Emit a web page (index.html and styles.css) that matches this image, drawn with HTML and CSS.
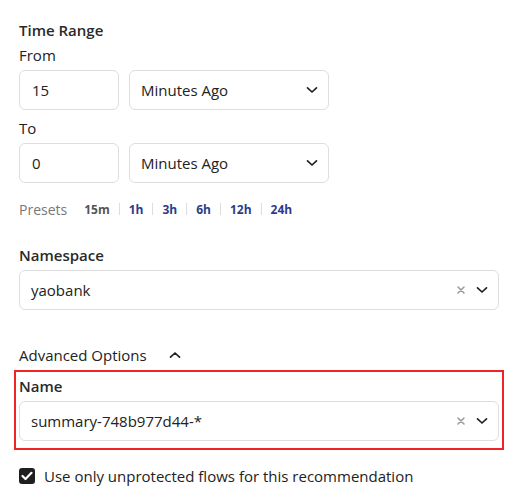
FILE: index.html
```html
<!DOCTYPE html>
<html lang="en">
<head>
    <meta charset="UTF-8">
    <meta name="viewport" content="width=device-width, initial-scale=1.0">
    <title>Recommendation Options</title>
    <link rel="stylesheet" href="styles.css">
</head>
<body>
    <div class="panel">
        <div class="label title">Time Range</div>
        <div class="label">From</div>
        <div class="row">
            <div class="field num">15</div>
            <div class="field unit">
                <span>Minutes Ago</span>
                <svg class="chev" width="12" height="8" viewBox="0 0 12 8"><path d="M1.5 1.8 L6 6 L10.5 1.8" fill="none" stroke="#222" stroke-width="1.7" stroke-linecap="round" stroke-linejoin="round"/></svg>
            </div>
        </div>
        <div class="label to">To</div>
        <div class="row">
            <div class="field num">0</div>
            <div class="field unit">
                <span>Minutes Ago</span>
                <svg class="chev" width="12" height="8" viewBox="0 0 12 8"><path d="M1.5 1.8 L6 6 L10.5 1.8" fill="none" stroke="#222" stroke-width="1.7" stroke-linecap="round" stroke-linejoin="round"/></svg>
            </div>
        </div>

        <div class="presets">
            <span class="presets-label">Presets</span>
            <span class="preset current">15m</span>
            <span class="sep"></span>
            <span class="preset">1h</span>
            <span class="sep"></span>
            <span class="preset">3h</span>
            <span class="sep"></span>
            <span class="preset">6h</span>
            <span class="sep"></span>
            <span class="preset">12h</span>
            <span class="sep"></span>
            <span class="preset">24h</span>
        </div>

        <div class="label title namespace">Namespace</div>
        <div class="field wide">
            <span>yaobank</span>
            <span class="controls">
                <svg width="10" height="10" viewBox="0 0 10 10"><path d="M2 2 L8 8 M8 2 L2 8" stroke="#999" stroke-width="1.5" stroke-linecap="round"/></svg>
                <svg class="chev" width="12" height="8" viewBox="0 0 12 8"><path d="M1.5 1.8 L6 6 L10.5 1.8" fill="none" stroke="#222" stroke-width="1.7" stroke-linecap="round" stroke-linejoin="round"/></svg>
            </span>
        </div>

        <div class="advanced">
            <span>Advanced Options</span>
            <svg width="12" height="8" viewBox="0 0 12 8"><path d="M1.5 6.2 L6 2 L10.5 6.2" fill="none" stroke="#222" stroke-width="1.7" stroke-linecap="round" stroke-linejoin="round"/></svg>
        </div>

        <div class="highlight">
            <div class="label title name">Name</div>
            <div class="field wide">
                <span>summary-748b977d44-*</span>
                <span class="controls">
                    <svg width="10" height="10" viewBox="0 0 10 10"><path d="M2 2 L8 8 M8 2 L2 8" stroke="#999" stroke-width="1.5" stroke-linecap="round"/></svg>
                    <svg class="chev" width="12" height="8" viewBox="0 0 12 8"><path d="M1.5 1.8 L6 6 L10.5 1.8" fill="none" stroke="#222" stroke-width="1.7" stroke-linecap="round" stroke-linejoin="round"/></svg>
                </span>
            </div>
        </div>

        <label class="check">
            <span class="box">
                <svg width="12" height="10" viewBox="0 0 12 10"><path d="M1.5 5 L4.5 8 L10.5 1.8" fill="none" stroke="#fff" stroke-width="2.2" stroke-linecap="round" stroke-linejoin="round"/></svg>
            </span>
            <span>Use only unprotected flows for this recommendation</span>
        </label>
    </div>
</body>
</html>
```

FILE: styles.css
```css
body {
    margin: 0;
    padding: 0;
    background: #fff;
    font-family: "Open Sans", "DejaVu Sans", sans-serif;
    font-size: 15px;
    color: #222;
}
.panel {
    width: 480px;
    padding: 20px 0 0 19px;
}
.label {
    line-height: 20px;
    height: 20px;
    margin-bottom: 5px;
}
.title {
    font-weight: 600;
    color: #2a2a2a;
}
.to {
    margin-top: 8px;
}
.row {
    display: flex;
    gap: 10px;
}
.field {
    box-sizing: border-box;
    height: 40px;
    border: 1px solid #dedede;
    border-radius: 6px;
    display: flex;
    align-items: center;
    font-size: 15px;
    background: #fff;
}
.num {
    width: 100px;
    padding-left: 12px;
}
.unit {
    width: 200px;
    padding: 0 10px 0 11px;
    justify-content: space-between;
}
.wide {
    width: 480px;
    padding: 0 10px 0 11px;
    justify-content: space-between;
}
.controls {
    display: flex;
    align-items: center;
    gap: 10px;
}
.presets {
    margin-top: 16px;
    height: 20px;
    display: flex;
    align-items: center;
    font-size: 14px;
}
.presets-label {
    color: #777;
    margin-right: 17px;
}
.preset {
    font-weight: 700;
    color: #2c3d8a;
    font-size: 12px;
}
.preset.current {
    color: #555;
}
.sep {
    width: 1px;
    height: 12px;
    background: #ddd;
    margin: 0 9px;
}
.namespace {
    margin-top: 26px;
}
.advanced {
    margin-top: 35px;
    height: 20px;
    line-height: 20px;
    display: flex;
    align-items: center;
    gap: 22px;
}
.highlight {
    margin: 5px 0 0 -5px;
    width: 490px;
    box-sizing: border-box;
    border: 2px solid #f02424;
    padding: 4px 3px 7px 3px;
}
.check {
    margin-top: 16px;
    height: 20px;
    display: flex;
    align-items: center;
    gap: 9px;
}
.box {
    width: 16px;
    height: 16px;
    border-radius: 3px;
    background: #1f1f1f;
    display: flex;
    align-items: center;
    justify-content: center;
}
```
